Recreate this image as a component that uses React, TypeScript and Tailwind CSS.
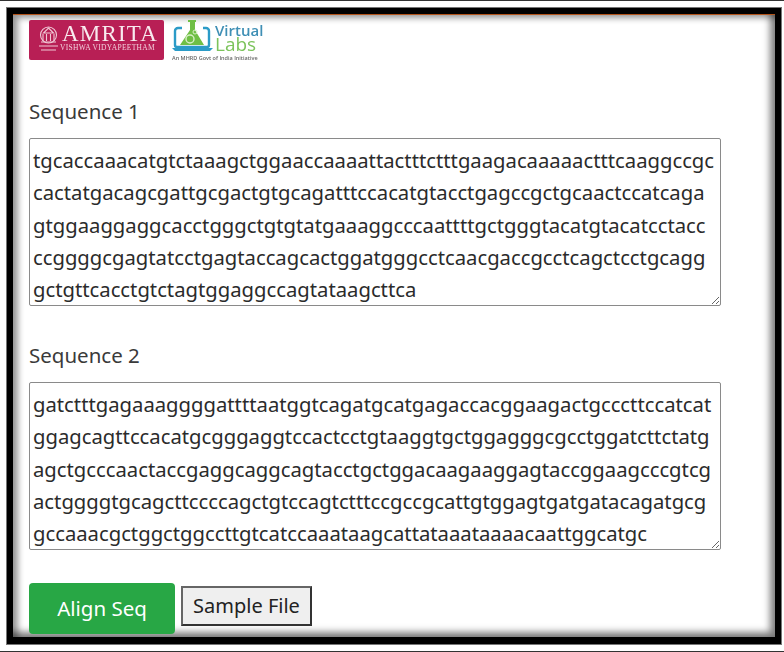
const seq1 = `tgcaccaaacatgtctaaagctggaaccaaaattactttctttgaagacaaaaactttcaaggccgc
cactatgacagcgattgcgactgtgcagatttccacatgtacctgagccgctgcaactccatcaga
gtggaaggaggcacctgggctgtgtatgaaaggcccaattttgctgggtacatgtacatcctacc
ccggggcgagtatcctgagtaccagcactggatgggcctcaacgaccgcctcagctcctgcagg
gctgttcacctgtctagtggaggccagtataagcttca`;
const seq2 = `gatctttgagaaaggggattttaatggtcagatgcatgagaccacggaagactgcccttccatcat
ggagcagttccacatgcgggaggtccactcctgtaaggtgctggagggcgcctggatcttctatg
agctgcccaactaccgaggcaggcagtacctgctggacaagaaggagtaccggaagcccgtcg
actggggtgcagcttccccagctgtccagtctttccgccgcattgtggagtgatgatacagatgcg
gccaaacgctggctggccttgtcatccaaataagcattataaataaaacaattggcatgc`;

function SeqField({ label, value }: { label: string; value: string }) {
  return (
    <div className="flex flex-col">
      <label className="text-[20.5px] leading-[28px] text-[#3a3a3a]">{label}</label>
      <textarea
        readOnly
        value={value}
        wrap="off"
        spellCheck={false}
        className="mt-[13px] h-[168px] w-[692px] overflow-hidden whitespace-pre rounded-[2px] border border-[#8a8a8a] bg-white px-[3px] py-[5px] text-[20.25px] leading-[32.3px] text-[#2b2b2b] outline-none"
      />
    </div>
  );
}

function AmritaLogo() {
  return (
    <div className="relative h-[40px] w-[135px] rounded-[2px] bg-[#b81f55] blur-[0.4px]">
      <svg className="absolute left-[9px] top-[5px]" width="21" height="28" viewBox="0 0 21 28" fill="none" stroke="#efc9d6" strokeWidth="1.1">
        <circle cx="10.5" cy="10" r="8" />
        <path d="M10.5 3l5 5h-10z" />
        <path d="M5 9v7M8.500 9v7M12.500 9v7M16 9v7M3 17h15M1 21h19M3 25h15" />
      </svg>
      <span className="absolute left-[33px] top-[5px] whitespace-nowrap font-['Liberation_Serif',serif] text-[23px] leading-[18px] tracking-[1.2px] text-[#f8e9ee]">AMRITA</span>
      <span className="absolute left-[31px] top-[24px] whitespace-nowrap font-['Liberation_Serif',serif] text-[7.500px] leading-[8px] tracking-[0.3px] text-[#f2cddb]">VISHWA VIDYAPEETHAM</span>
    </div>
  );
}

function VirtualLabsLogo() {
  return (
    <div className="relative h-[44px] w-[92px] blur-[0.4px]">
      <svg className="absolute left-0 top-0" width="44" height="34" viewBox="0 0 44 34" fill="none">
        <path d="M10 8H6a3 3 0 0 0-3 3v14a2 2 0 0 0 2 2h30a2 2 0 0 0 2-2V11a3 3 0 0 0-3-3h-3" stroke="#2b9bc7" strokeWidth="2.400" />
        <path d="M0 28h41l-3 3H3z" fill="#2b9bc7" />
        <path d="M16 0h8v2h-1v8l9 15H8l10-15V2h-2z" fill="#6fbf45" />
        <circle cx="18" cy="19" r="4" stroke="#d8efc8" strokeWidth="1.400" />
        <circle cx="23" cy="12" r="2" stroke="#d8efc8" strokeWidth="1" />
      </svg>
      <span className="absolute left-[43px] top-[5px] font-['Open_Sans',sans-serif] text-[15px] font-semibold leading-[11px] text-[#3f8fb5]">Virtual</span>
      <span className="absolute left-[43px] top-[16px] font-['Open_Sans',sans-serif] text-[19px] leading-[16px] text-[#7cc35c]">Labs</span>
      <span className="absolute left-0 top-[35px] whitespace-nowrap font-['Open_Sans',sans-serif] text-[5.500px] font-semibold leading-[6px] text-[#666]">An MHRD Govt of India Initiative</span>
    </div>
  );
}

export default function App() {
  return (
    <div className="h-[652px] w-[784px] overflow-hidden border-t border-b border-t-[#333] border-b-[#333] bg-white px-[6px] pt-[6px] font-['Noto_Sans',sans-serif]">
      <div className="h-[638px] w-[776px] border border-[#777] bg-black px-[6px] pb-[7px] pt-[6px]">
        <div className="h-[623px] border-t border-t-[#b4541a] bg-white pl-[16px] pt-[5px] shadow-[inset_5px_3px_6px_rgba(0,0,0,0.4),inset_-5px_-5px_7px_rgba(0,0,0,0.5)]">
          <div className="flex items-start gap-[8px]">
            <AmritaLogo />
            <VirtualLabsLogo />
          </div>
          <div className="mt-[33px]">
            <SeqField label="Sequence 1" value={seq1} />
          </div>
          <div className="mt-[35px]">
            <SeqField label="Sequence 2" value={seq2} />
          </div>
          <div className="mt-[33px] flex items-start gap-[6px]">
            <button className="h-[51px] w-[146px] rounded-[4px] bg-[#28a745] text-[20.5px] text-white">Align Seq</button>
            <button className="mt-[3px] h-[40px] w-[131px] border-2 border-[#333] border-l-[#666] border-t-[#666] bg-[#efefef] text-[20px] text-[#222]">Sample File</button>
          </div>
        </div>
      </div>
    </div>
  );
}
